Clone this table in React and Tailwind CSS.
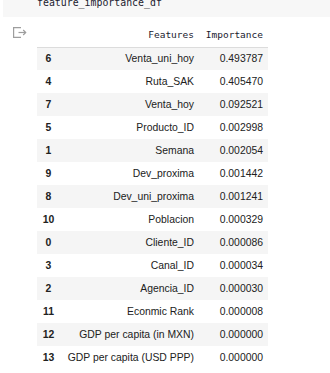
import React from "react";

const rows = [
  ["6", "Venta_uni_hoy", "0.493787"],
  ["4", "Ruta_SAK", "0.405470"],
  ["7", "Venta_hoy", "0.092521"],
  ["5", "Producto_ID", "0.002998"],
  ["1", "Semana", "0.002054"],
  ["9", "Dev_proxima", "0.001442"],
  ["8", "Dev_uni_proxima", "0.001241"],
  ["10", "Poblacion", "0.000329"],
  ["0", "Cliente_ID", "0.000086"],
  ["3", "Canal_ID", "0.000034"],
  ["2", "Agencia_ID", "0.000030"],
  ["11", "Econmic Rank", "0.000008"],
  ["12", "GDP per capita (in MXN)", "0.000000"],
  ["13", "GDP per capita (USD PPP)", "0.000000"],
];

export default function App() {
  return (
    <div className="w-[330px] h-[373px] bg-white overflow-hidden">
      <div className="ml-[3px] h-[17px] bg-[#f7f7f7] overflow-hidden">
        <div className="pl-[34px] -mt-[3px] font-['DejaVu_Sans_Mono',monospace] text-[9.9px] leading-[12px] text-[#1a1a2e] whitespace-pre">
          feature_importance_df
        </div>
      </div>
      <div className="flex mt-[7px]">
        <div className="w-[37px] shrink-0 pl-[13px] pt-[3px]">
          <svg width="14" height="11" viewBox="0 0 14 11" fill="none" stroke="#9e9e9e" strokeWidth="1.2">
            <path d="M8 0.6 H0.6 V10.4 H8" />
            <path d="M5.5 5.5 H12.6" />
            <path d="M10.2 3 L12.7 5.5 L10.2 8" />
          </svg>
        </div>
        <table className="border-collapse w-[231px] table-fixed font-['Liberation_Sans',Arial,sans-serif] text-[10.4px] text-[#212121]">
          <colgroup>
            <col className="w-[23px]" />
            <col className="w-[139px]" />
            <col className="w-[69px]" />
          </colgroup>
          <thead>
            <tr className="h-[23px] border-b border-[#dcdcdc]">
              <th className="p-0"></th>
              <th className="p-0 pr-[5px] text-right font-normal font-['DejaVu_Sans_Mono',monospace] text-[9.5px] text-[#1a1a2e]">Features</th>
              <th className="p-0 pr-[5px] text-right font-normal font-['DejaVu_Sans_Mono',monospace] text-[9.5px] text-[#1a1a2e]">Importance</th>
            </tr>
          </thead>
          <tbody>
            {rows.map((r, i) => (
              <tr key={r[0]} className={i % 2 === 0 ? "h-[23px] bg-[#f5f5f5]" : "h-[23px] bg-white"}>
                <td className="p-0 text-center font-bold">{r[0]}</td>
                <td className="p-0 pr-[5px] text-right whitespace-nowrap">{r[1]}</td>
                <td className="p-0 pr-[5px] text-right">{r[2]}</td>
              </tr>
            ))}
          </tbody>
        </table>
      </div>
    </div>
  );
}
